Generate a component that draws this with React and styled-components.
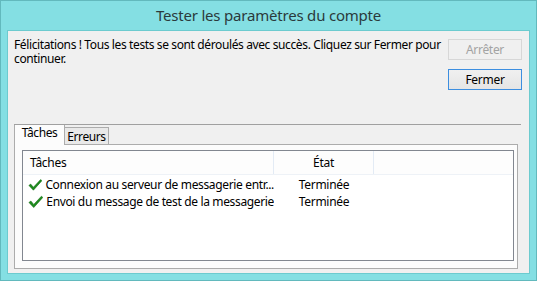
import React from 'react';
import styled, { createGlobalStyle } from 'styled-components';

const GlobalStyle = createGlobalStyle`
  html, body { margin: 0; padding: 0; background: #84dfe3; }
  * { box-sizing: border-box; }
`;

const Window = styled.div`
  width: 537px;
  height: 281px;
  background: #84dfe3;
  border: 1px solid #62b9bd;
  padding: 0 6px 6px 6px;
  display: flex;
  flex-direction: column;
  font-family: "Noto Sans", "Open Sans", sans-serif;
  font-size: 12px;
  color: #000;
`;

const TitleBar = styled.div`
  height: 29px;
  display: flex;
  align-items: center;
  justify-content: center;
  font-size: 15px;
  color: #2b3a3c;
  letter-spacing: -0.2px;
  padding-bottom: 1px;
`;

const Client = styled.div`
  flex: 1;
  background: #f0f0f0;
  border: 1px solid #6ccbcf;
  display: flex;
  flex-direction: column;
  padding: 0 11px 4px 6px;
`;

const Top = styled.div`
  display: flex;
  justify-content: space-between;
  height: 93px;
  padding-top: 7px;
`;

const Message = styled.p`
  margin: 0;
  width: 430px;
  line-height: 14px;
  letter-spacing: -0.38px;
`;

const ButtonColumn = styled.div`
  display: flex;
  flex-direction: column;
  gap: 9px;
  padding-top: 1px;
  margin-right: -4px;
`;

const Button = styled.button`
  width: 74px;
  height: 21px;
  padding: 0;
  font-family: inherit;
  font-size: 12px;
  letter-spacing: -0.3px;
  color: ${p => (p.disabled ? '#a3a3a3' : '#000')};
  background: ${p => (p.disabled ? '#f0f0f0' : 'linear-gradient(#f0f0f0, #e5e5e5)')};
  border: 1px solid ${p => (p.disabled ? '#d7d7d7' : '#3c8ee0')};
  border-radius: 0;
`;

const Separator = styled.div`
  height: 1px;
  background: #a0a0a0;
  margin-right: -3px;
`;

const Tabs = styled.div`
  display: flex;
  align-items: flex-end;
  height: 19px;
`;

const Tab = styled.div`
  height: ${p => (p.active ? '20px' : '17px')};
  width: ${p => (p.active ? '51px' : '44px')};
  text-align: center;
  line-height: ${p => (p.active ? '16px' : '17px')};
  background: ${p => (p.active ? '#fcfcfc' : '#e9e9e9')};
  border-left: 1px solid #acacac;
  border-right: 1px solid #acacac;
  border-top: ${p => (p.active ? 'none' : '1px solid #acacac')};
  letter-spacing: -0.4px;
  white-space: nowrap;
  margin-bottom: ${p => (p.active ? '-1px' : '0')};
  position: relative;
  z-index: ${p => (p.active ? 1 : 0)};
  & + & { border-left: none; }
`;

const Panel = styled.div`
  flex: 1;
  background: #fcfcfc;
  border: 1px solid #acacac;
  padding: 5px 3px 7px 7px;
  display: flex;
`;

const ListView = styled.div`
  flex: 1;
  background: #fff;
  border: 1px solid #828790;
  display: flex;
  flex-direction: column;
`;

const HeaderRow = styled.div`
  display: flex;
  height: 24px;
  border-bottom: 1px solid #eef2f7;
  background: #fdfdfd;
`;

const HeaderCell = styled.div`
  width: ${p => p.w}px;
  padding-left: ${p => (p.center ? '0' : '7px')};
  display: flex;
  align-items: center;
  justify-content: ${p => (p.center ? 'center' : 'flex-start')};
  border-right: 1px solid #e3ebf5;
  letter-spacing: -0.3px;
`;

const Row = styled.div`
  display: flex;
  height: 17px;
  align-items: center;
`;

const TaskCell = styled.div`
  width: 251px;
  padding-left: 5px;
  display: flex;
  align-items: center;
  gap: 3px;
  white-space: nowrap;
  overflow: hidden;
  letter-spacing: -0.35px;
`;

const StateCell = styled.div`
  width: 100px;
  text-align: center;
  letter-spacing: -0.3px;
`;

const Body = styled.div`
  padding-top: 1px;
`;

const Check = () => (
  <svg width="16" height="14" viewBox="0 0 16 14">
    <path d="M1 7.5 L3 6 L6 9.5 L14 1 L15.5 2.2 L6 12.8 Z" fill="#1e8c1e" stroke="#0f6a0f" strokeWidth="0.6" strokeLinejoin="round" />
  </svg>
);

const tasks = [
  { name: 'Connexion au serveur de messagerie entr...', state: 'Terminée' },
  { name: 'Envoi du message de test de la messagerie', state: 'Terminée' },
];

export default function App() {
  return (
    <>
      <GlobalStyle />
      <Window>
        <TitleBar>Tester les paramètres du compte</TitleBar>
        <Client>
          <Top>
            <Message>
              Félicitations ! Tous les tests se sont déroulés avec succès. Cliquez sur Fermer pour continuer.
            </Message>
            <ButtonColumn>
              <Button disabled>Arrêter</Button>
              <Button>Fermer</Button>
            </ButtonColumn>
          </Top>
          <Separator />
          <Tabs>
            <Tab active>Tâches</Tab>
            <Tab>Erreurs</Tab>
          </Tabs>
          <Panel>
            <ListView>
              <HeaderRow>
                <HeaderCell w={251}>Tâches</HeaderCell>
                <HeaderCell w={100} center>État</HeaderCell>
              </HeaderRow>
              <Body>
                {tasks.map((t, i) => (
                  <Row key={i}>
                    <TaskCell><Check />{t.name}</TaskCell>
                    <StateCell>{t.state}</StateCell>
                  </Row>
                ))}
              </Body>
            </ListView>
          </Panel>
        </Client>
      </Window>
    </>
  );
}
